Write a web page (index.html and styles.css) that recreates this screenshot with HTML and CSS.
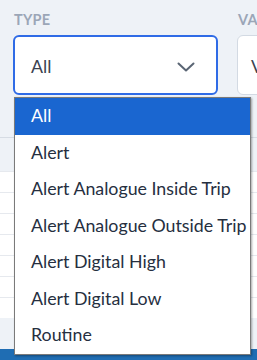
FILE: index.html
```html
<!DOCTYPE html>
<html lang="en">
<head>
    <meta charset="UTF-8">
    <meta name="viewport" content="width=device-width, initial-scale=1.0">
    <title>Events</title>
    <link rel="stylesheet" href="styles.css">
</head>
<body>
    <!-- Filters -->
    <div class="filters">
        <div class="filter">
            <label class="filter-label">Type</label>
            <div class="select select-open">
                <span class="select-value">All</span>
                <svg class="chevron" width="18" height="10" viewBox="0 0 18 10">
                    <path d="M1.5 1.5 L9 8.5 L16.5 1.5" fill="none" stroke="#5a6574" stroke-width="2" stroke-linecap="round" stroke-linejoin="round"/>
                </svg>
            </div>
        </div>
        <div class="filter">
            <label class="filter-label">Value</label>
            <div class="select">
                <span class="select-value">Value</span>
            </div>
        </div>
    </div>

    <!-- Table behind the menu -->
    <div class="toolbar"></div>
    <div class="table">
        <div class="row"></div>
        <div class="row"></div>
        <div class="row"></div>
        <div class="row"></div>
        <div class="row"></div>
        <div class="row"></div>
        <div class="row"></div>
    </div>
    <div class="footer"></div>

    <!-- Open dropdown -->
    <ul class="menu">
        <li class="menu-item active">All</li>
        <li class="menu-item">Alert</li>
        <li class="menu-item">Alert Analogue Inside Trip</li>
        <li class="menu-item">Alert Analogue Outside Trip</li>
        <li class="menu-item">Alert Digital High</li>
        <li class="menu-item">Alert Digital Low</li>
        <li class="menu-item">Routine</li>
    </ul>
</body>
</html>
```

FILE: styles.css
```css
body {
    margin: 0;
    font-family: Lato, "Open Sans", sans-serif;
    background-color: #eef2f7;
    color: #2c3440;
    overflow: hidden;
}

/* Filters */
.filters {
    display: flex;
    gap: 19px;
    padding: 11px 0 0 13px;
    white-space: nowrap;
}

.filter {
    flex: 0 0 205px;
}

.filter-label {
    display: block;
    font-size: 14.5px;
    font-weight: 700;
    letter-spacing: 0.2px;
    text-transform: uppercase;
    color: #9ba6b7;
    height: 24px;
    padding-left: 1px;
}

.select {
    display: flex;
    align-items: center;
    justify-content: space-between;
    height: 60px;
    box-sizing: border-box;
    background-color: #fff;
    border: 1px solid #d3dae3;
    border-radius: 6px;
    padding: 0 21px 0 13px;
    font-size: 17.8px;
    color: #3b4250;
}

.select-open {
    border: 2px solid #2f6be6;
    padding-left: 16px;
}

.select-value {
    padding-top: 2px;
}

.chevron {
    margin-top: 3px;
}

/* Table behind */
.toolbar {
    margin-top: 42px;
    height: 33px;
    border-top: 1px solid #d6dce4;
}

.table {
    background-color: #fff;
}

.row {
    height: 20px;
    border-top: 1px solid #e6e9ee;
}

.footer {
    margin-top: 31px;
    height: 20px;
    background-color: #1f6db3;
}

/* Dropdown menu */
.menu {
    position: absolute;
    left: 14px;
    top: 97px;
    width: 237px;
    margin: 0;
    padding: 0;
    list-style: none;
    background-color: #fff;
    border: 1px solid #7a7a7a;
    box-sizing: border-box;
    box-shadow: 1px 1px 2px rgba(0, 0, 0, 0.35);
}

.menu-item {
    height: 36.5px;
    line-height: 35px;
    padding-left: 16px;
    font-size: 17.8px;
    color: #262f3f;
    white-space: nowrap;
}

.menu-item.active {
    background-color: #1a66d0;
    color: #fff;
}
```
